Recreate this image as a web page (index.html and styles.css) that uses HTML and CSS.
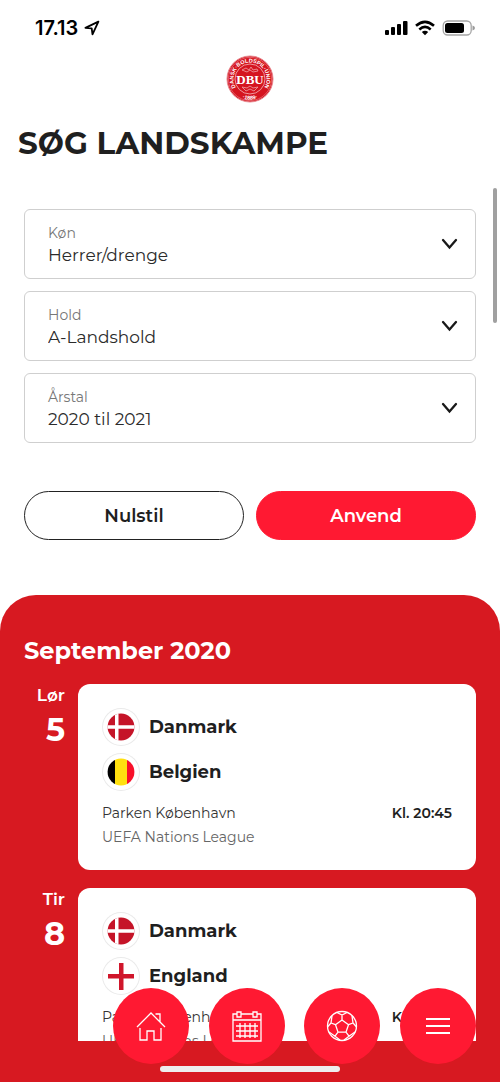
FILE: index.html
```html
<!DOCTYPE html>
<html lang="da">
<head>
<meta charset="utf-8">
<meta name="viewport" content="width=device-width, initial-scale=1">
<title>Søg landskampe</title>
<link rel="stylesheet" href="styles.css">
</head>
<body>
<svg class="defs" aria-hidden="true">
  <defs>
    <clipPath id="disc"><circle cx="19" cy="19" r="13.4"/></clipPath>
    <symbol id="flag-dk" viewBox="0 0 38 38"><g clip-path="url(#disc)"><path fill="#c51428" d="M5 5h28v28H5z"/><path fill="#fff" d="M13 5h3.500v28H13zM5 17.300h28v3.500H5z"/></g></symbol>
    <symbol id="flag-be" viewBox="0 0 38 38"><g clip-path="url(#disc)"><path d="M5 5h8v28H5z"/><path fill="#ffe00f" d="M13 5h12v28H13z"/><path fill="#f8102a" d="M25 5h8v28h-8z"/></g></symbol>
    <symbol id="flag-en" viewBox="0 0 38 38"><path fill="#d0162b" d="M17 6h4.500v11H32v4.500H21.500V33H17V21.500H6V17h11z"/></symbol>
    <symbol id="chevron" viewBox="0 0 18 14"><path d="M3 3l6.500 7.500L16 3" fill="none" stroke="#191919" stroke-width="2.300" stroke-linecap="round"/></symbol>
  </defs>
</svg>
<div class="screen">
  <header class="status">
    <div class="clock">17.13
      <svg width="16" height="16" viewBox="0 0 16 16" fill="none" stroke="#000" stroke-width="1.8" stroke-linejoin="round"><path d="M14.400 1.600L1.400 7.900l6.300.4.8 6z"/></svg>
    </div>
    <svg width="90" height="16" viewBox="0 0 90 16">
      <rect x="0" y="10" width="4" height="5" rx="1"/><rect x="6" y="7" width="4" height="8" rx="1"/><rect x="12" y="4" width="4" height="11" rx="1"/><rect x="18" y="1" width="4.500" height="14" rx="1"/>
      <g fill="none" stroke="#000" stroke-width="2.6"><path d="M31 5.800q9-8 18 0"/><path d="M34.300 9.400q5.700-5 11.400 0"/></g><path d="M36.800 12q3.200-2.400 6.400 0L40 15.300z"/>
      <rect x="58.200" y="1" width="28" height="14" rx="4.500" fill="none" stroke="#a5a5a5" stroke-width="1.300"/><rect x="60" y="3" width="19" height="10" rx="2.500"/><path fill="#999" d="M87.500 5.500q2.500.7 2.500 2.500t-2.500 2.500z"/>
    </svg>
  </header>
  <main class="content">
    <div class="brand">
      <svg width="48" height="48" viewBox="0 0 48 48" role="img" aria-label="DBU">
        <defs><path id="arc-top" d="M10.500 33.500A16.500 16.500 0 1 1 37.500 33.500"/><path id="arc-bottom" d="M11 40.200A20.800 20.800 0 0 0 37 40.200"/></defs>
        <circle cx="24" cy="24" r="23" fill="#d5141f" stroke="#e98990" stroke-width="1"/>
        <circle cx="24" cy="24" r="21.600" fill="none" stroke="#ee9da2" stroke-width=".5"/>
        <circle cx="24" cy="24" r="15" fill="none" stroke="#f4babd" stroke-width=".8"/>
        <path d="M16 15l4-2 3 2 2-3 2 3 4-1 1 2-5 1-3-2-3 2zM16 32l5 1 3-2 3 2 5-1-4 4-4-2-4 2z" fill="none" stroke="#f0a2a7" stroke-width=".8"/>
        <text class="crest-ring"><textPath href="#arc-top" startOffset="50%">DANSK·BOLDSPIL·UNION</textPath></text>
        <text class="crest-ring"><textPath href="#arc-bottom" startOffset="50%">·1889·</textPath></text>
        <text class="crest-name" x="24" y="29">DBU</text>
      </svg>
    </div>
    <h1>SØG LANDSKAMPE</h1>
    <form class="filters">
      <div class="field">
        <div class="field-body"><label for="gender">Køn</label><select id="gender"><option>Herrer/drenge</option></select></div>
        <svg class="chevron"><use href="#chevron"/></svg>
      </div>
      <div class="field">
        <div class="field-body"><label for="team">Hold</label><select id="team"><option>A-Landshold</option></select></div>
        <svg class="chevron"><use href="#chevron"/></svg>
      </div>
      <div class="field">
        <div class="field-body"><label for="year">Årstal</label><select id="year"><option>2020 til 2021</option></select></div>
        <svg class="chevron"><use href="#chevron"/></svg>
      </div>
      <div class="actions">
        <button class="btn" type="reset">Nulstil</button>
        <button class="btn btn-primary" type="button">Anvend</button>
      </div>
    </form>
    <section class="matches">
      <h2>September 2020</h2>
      <article class="match">
        <div class="date"><span class="weekday">Lør</span><span class="day">5</span></div>
        <div class="card">
          <div class="team"><svg class="flag"><use href="#flag-dk"/></svg>Danmark</div>
          <div class="team"><svg class="flag"><use href="#flag-be"/></svg>Belgien</div>
          <div class="info"><span class="venue">Parken København</span><span class="time">Kl. 20:45</span></div>
          <div class="info league">UEFA Nations League</div>
        </div>
      </article>
      <article class="match">
        <div class="date"><span class="weekday">Tir</span><span class="day">8</span></div>
        <div class="card">
          <div class="team"><svg class="flag"><use href="#flag-dk"/></svg>Danmark</div>
          <div class="team"><svg class="flag"><use href="#flag-en"/></svg>England</div>
          <div class="info"><span class="venue">Parken København</span><span class="time">Kl. 20:45</span></div>
          <div class="info league">UEFA Nations League</div>
        </div>
      </article>
    </section>
  </main>
  <div class="scroll-thumb"></div>
  <nav class="tabs">
    <button type="button" aria-label="Hjem"><svg width="32" height="32" viewBox="0 0 32 32"><path d="M2 17L16 3l14 14M5 18v12h7v-9h7v9h7V18M20.500 4H25v8"/></svg></button>
    <button type="button" aria-label="Kalender"><svg width="32" height="32" viewBox="0 0 32 32"><path d="M6 4H2v27h28V4h-4M10 4h12M2 10h28M5 16h22M5 21h22M5 26h22M9 13v15M14 13v15M19 13v15M24 13v15M6 2h4v5H6zM22 2h4v5h-4z"/></svg></button>
    <button type="button" aria-label="Kampe"><svg width="32" height="32" viewBox="0 0 32 32"><circle cx="16" cy="16" r="14.500"/><path d="M16 10l6.500 4.700-2.500 7.500h-8l-2.500-7.500zM16 10V5M22.500 14.700l4.500-1.700M20 22.200l3 4M12 22.200l-3 4M9.500 14.700L5 13M11 2.500L16 5l5-2.500M26 6l1 7 3.500 4M29 22l-6 4.200L18 30M14 30l-5-3.800L3 22M1.500 17L5 13l1-7"/></svg></button>
    <button type="button" aria-label="Menu"><svg width="32" height="32" viewBox="0 0 32 32" class="bars"><path d="M4 9h24M4 16h24M4 23h24"/></svg></button>
  </nav>
  <div class="home-indicator"></div>
</div>
</body>
</html>
```
FILE: styles.css
```css
* {
  box-sizing: border-box;
}

body {
  margin: 0;
  background: #fff;
  color: #1f1f1f;
  font-family: Montserrat, Inter, "Open Sans", sans-serif;
}

.defs {
  position: absolute;
  width: 0;
  height: 0;
}

.screen {
  position: relative;
  display: flex;
  flex-direction: column;
  height: 100vh;
  padding-bottom: 41px;
  background: linear-gradient(#fff 60%, #d71921 60%);
  overflow: hidden;
}

.status {
  display: flex;
  justify-content: space-between;
  align-items: center;
  flex: none;
  height: 55px;
  padding: 0 25px 0 35px;
  background: #fff;
}

.clock {
  display: flex;
  align-items: center;
  gap: 6px;
  color: #000;
  font: 600 20px/24px Inter, sans-serif;
}

.content {
  flex: 1;
  min-height: 0;
  overflow: hidden;
  background: #fff;
}

.brand {
  display: flex;
  justify-content: center;
}

.crest-ring {
  fill: #fff;
  font: 700 5.5px "Liberation Sans", sans-serif;
  text-anchor: middle;
}

.crest-name {
  fill: #fff;
  font: 700 13px "Liberation Serif", serif;
  text-anchor: middle;
}

h1 {
  margin: 20px 18px 46px;
  font-size: 31px;
  line-height: 40px;
  font-weight: 700;
}

.filters {
  display: grid;
  gap: 12px;
  padding: 0 24px;
}

.field {
  display: flex;
  align-items: center;
  height: 70px;
  padding: 0 17px 0 23px;
  border: 1px solid #cfcfcf;
  border-radius: 6px;
}

.field-body {
  flex: 1;
  display: flex;
  flex-direction: column;
}

.field label {
  color: #777;
  font-size: 14px;
  line-height: 22px;
}

.field select {
  appearance: none;
  width: 100%;
  height: 23px;
  padding: 0;
  border: 0;
  background: transparent;
  color: #2b2b2b;
  font: inherit;
  font-size: 17px;
}

.chevron {
  width: 18px;
  height: 14px;
}

.actions {
  display: grid;
  grid-template-columns: 1fr 1fr;
  gap: 12px;
  margin-top: 36px;
}

.btn {
  height: 49px;
  border: 1px solid #222;
  border-radius: 25px;
  background: #fff;
  color: #1f1f1f;
  font: inherit;
  font-size: 18px;
  font-weight: 600;
}

.btn-primary {
  border-color: #ff1932;
  background: #ff1932;
  color: #fff;
}

.matches {
  display: grid;
  gap: 18px;
  margin-top: 55px;
  padding: 40px 24px 24px;
  border-radius: 36px 36px 0 0;
  background: #d71921;
}

h2 {
  margin: 0;
  color: #fff;
  font-size: 24px;
  line-height: 31px;
  font-weight: 700;
}

.match {
  display: grid;
  grid-template-columns: 41px 1fr;
  gap: 13px;
}

.date {
  display: flex;
  flex-direction: column;
  color: #fff;
  text-align: right;
}

.weekday {
  font-size: 17px;
  line-height: 22px;
  font-weight: 600;
}

.day {
  font-size: 32px;
  line-height: 48px;
  font-weight: 700;
}

.card {
  padding: 24px 24px 21px;
  border-radius: 12px;
  background: #fff;
}

.team {
  display: flex;
  align-items: center;
  gap: 9px;
  margin-bottom: 7px;
  font-size: 18px;
  font-weight: 700;
}

.flag {
  width: 38px;
  height: 38px;
  border-radius: 50%;
  box-shadow: inset 0 0 0 1px #eaeaea;
}

.info {
  display: flex;
  justify-content: space-between;
  font-size: 14px;
  line-height: 24px;
}

.team + .info {
  margin-top: 10px;
}

.venue {
  color: #333;
}

.time {
  font-weight: 600;
}

.league {
  color: #666;
}

.scroll-thumb {
  position: absolute;
  top: 188px;
  right: 3px;
  width: 4px;
  height: 135px;
  border-radius: 2px;
  background: #a0a0a0;
}

.tabs {
  position: absolute;
  right: 24px;
  bottom: 18px;
  display: flex;
  justify-content: space-between;
  width: 363px;
}

.tabs button {
  display: grid;
  place-items: center;
  width: 76px;
  height: 76px;
  padding: 0;
  border: 0;
  border-radius: 50%;
  background: #ff1932;
}

.tabs svg {
  fill: none;
  stroke: #fff;
  stroke-width: 1.3;
}

.tabs .bars {
  stroke-width: 2;
}

.home-indicator {
  position: absolute;
  bottom: 10px;
  left: 32%;
  right: 32%;
  height: 6px;
  border-radius: 3px;
  background: #eee;
}
```
